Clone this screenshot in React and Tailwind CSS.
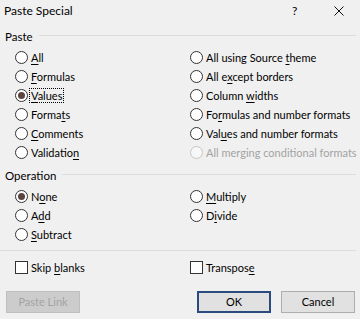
import React from "react";

const FONT = { fontFamily: '"Lato", "Noto Sans", sans-serif' };

function L({ t, k }) {
  if (k === undefined || k < 0) return <>{t}</>;
  return (
    <>
      {t.slice(0, k)}
      <span className="underline underline-offset-[2px] decoration-1">{t[k]}</span>
      {t.slice(k + 1)}
    </>
  );
}

function Radio({ t, k, checked, disabled, focus }) {
  return (
    <div className="flex items-center h-[19px]">
      <span
        className={`w-[13px] h-[13px] rounded-full border flex items-center justify-center shrink-0 ${
          disabled ? "border-[#c6c6c6] bg-[#f7f7f7]" : "border-[#333333] bg-white"
        }`}
      >
        {checked && <span className="w-[7px] h-[7px] rounded-full bg-[#5b4440]" />}
      </span>
      <span
        className={`ml-[2px] px-[1px] leading-[13px] text-[11px] whitespace-nowrap ${
          disabled ? "text-[#a3a3a3]" : "text-black"
        } ${focus ? "outline outline-1 outline-dotted outline-black" : ""}`}
      >
        <L t={t} k={k} />
      </span>
    </div>
  );
}

function Check({ t, k }) {
  return (
    <div className="flex items-center h-[18px]">
      <span className="w-[13px] h-[13px] border border-[#333333] bg-white shrink-0" />
      <span className="ml-[3px] text-[11px] leading-[13px] text-black whitespace-nowrap">
        <L t={t} k={k} />
      </span>
    </div>
  );
}

function GroupHeader({ label }) {
  return (
    <div className="flex items-center h-[16px] pl-[5px] pr-[4px]">
      <span className="text-[11.5px] leading-[14px] text-black">{label}</span>
      <div className="flex-1 h-px bg-[#dcdcdc] ml-[6px] mb-[4px]" />
    </div>
  );
}

export default function App() {
  return (
    <div className="w-[360px] h-[319px] bg-[#f0f0f0] overflow-hidden flex flex-col" style={FONT}>
      {/* Title bar */}
      <div className="flex items-center h-[21px] pl-[4px]">
        <span className="text-[12px] text-black flex-1">Paste Special</span>
        <span className="text-[12px] text-black w-[42px]">?</span>
        <svg width="10" height="10" viewBox="0 0 10 10" className="mr-[16px]">
          <path d="M0.5 0.5 L9.5 9.5 M9.5 0.5 L0.5 9.5" stroke="#111" strokeWidth="1" />
        </svg>
      </div>

      {/* Paste group */}
      <div className="mt-[8px]">
        <GroupHeader label="Paste" />
      </div>
      <div className="mt-[3px] grid grid-cols-[175px_1fr] pl-[15px]">
        <div className="flex flex-col">
          <Radio t="All" k={0} />
          <Radio t="Formulas" k={0} />
          <Radio t="Values" k={0} checked focus />
          <Radio t="Formats" k={5} />
          <Radio t="Comments" k={0} />
          <Radio t="Validation" k={9} />
        </div>
        <div className="flex flex-col">
          <Radio t="All using Source theme" k={17} />
          <Radio t="All except borders" k={5} />
          <Radio t="Column widths" k={7} />
          <Radio t="Formulas and number formats" k={2} />
          <Radio t="Values and number formats" k={3} />
          <Radio t="All merging conditional formats" disabled />
        </div>
      </div>

      {/* Operation group */}
      <div className="mt-[6px]">
        <GroupHeader label="Operation" />
      </div>
      <div className="mt-[3px] grid grid-cols-[175px_1fr] pl-[15px]">
        <div className="flex flex-col">
          <Radio t="None" k={1} checked />
          <Radio t="Add" k={1} />
          <Radio t="Subtract" k={0} />
        </div>
        <div className="flex flex-col">
          <Radio t="Multiply" k={0} />
          <Radio t="Divide" k={1} />
        </div>
      </div>

      {/* Separator */}
      <div className="mt-[6px] h-px bg-[#dcdcdc] mr-[4px]" />

      {/* Checkboxes */}
      <div className="mt-[7px] grid grid-cols-[175px_1fr] pl-[15px]">
        <Check t="Skip blanks" k={5} />
        <Check t="Transpose" k={8} />
      </div>

      {/* Buttons */}
      <div className="mt-[15px] flex items-center pl-[6px] pr-[5px]">
        <div className="w-[74px] h-[22px] bg-[#cccccc] border border-[#bfbfbf] flex items-center justify-center text-[11px] text-[#a3a3a3]">
          Paste Link
        </div>
        <div className="flex-1" />
        <div className="w-[74px] h-[22px] bg-[#e1e1e1] border-2 border-[#2b4a7e] flex items-center justify-center text-[11px] text-black">
          OK
        </div>
        <div className="w-[74px] h-[22px] ml-[10px] bg-[#e1e1e1] border border-[#adadad] flex items-center justify-center text-[11px] text-black">
          Cancel
        </div>
      </div>
    </div>
  );
}
